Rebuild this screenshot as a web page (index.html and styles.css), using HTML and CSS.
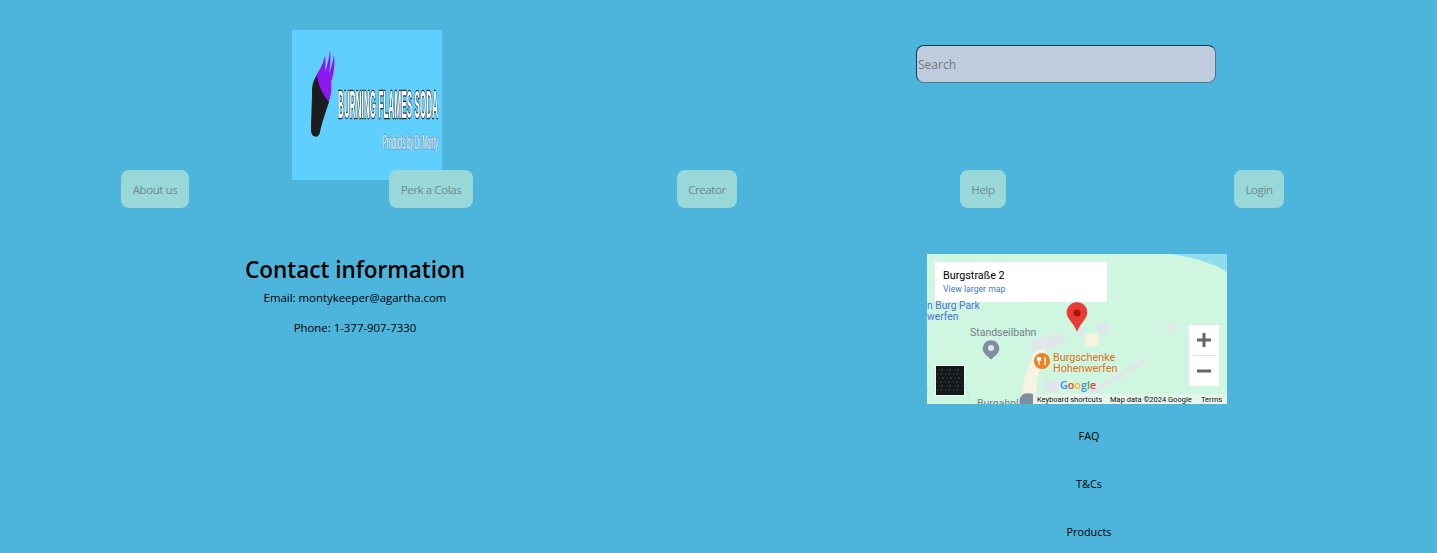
FILE: index.html
```html
<!DOCTYPE html>
<html lang="en">
<head>
<meta charset="utf-8">
<title>Burning Flames Soda</title>
<link rel="stylesheet" href="styles.css">
</head>
<body>
<header class="top">
  <svg class="logo" viewBox="0 0 150 150" width="150" height="150" role="img" aria-label="Burning Flames Soda logo">
    <defs><filter id="soft"><feGaussianBlur stdDeviation="0.45"/></filter></defs>
    <rect class="logo-bg" width="150" height="150"/>
    <g filter="url(#soft)">
      <path class="flame" d="M23 48C27 40 31 36 33 25C34 32 33 38 33 42C35 36 37 30 38 20C39 28 38 38 37 44C39 38 41 32 42 25C43 34 42 44 39 52C40 58 39 66 36 74Z"/>
      <path class="torch" d="M25 46C21 50 20 56 20 62C20 75 19 90 19 100C19 108 27 109 28 102C30 92 33 84 37 72C32 66 27 58 25 46Z"/>
      <text class="logo-title" transform="translate(46 88) scale(1 4.8)" textLength="100">BURNING FLAMES SODA</text>
      <text class="logo-sub" transform="translate(91 119) scale(1 3.4)" textLength="55" lengthAdjust="spacingAndGlyphs">Products by Dr Monty</text>
    </g>
  </svg>
  <input class="search" type="text" placeholder="Search">
</header>

<nav class="nav">
  <a class="nav-btn">About us</a>
  <a class="nav-btn">Perk a Colas</a>
  <a class="nav-btn">Creator</a>
  <a class="nav-btn">Help</a>
  <a class="nav-btn">Login</a>
</nav>

<main class="main">
  <section class="contact">
    <h2 class="contact-title">Contact information</h2>
    <p class="contact-line">Email: montykeeper@agartha.com</p>
    <p class="contact-line">Phone: 1-377-907-7330</p>
  </section>
  <svg class="map" viewBox="0 0 300 150" width="300" height="150" role="img" aria-label="Map of Burgstraße 2">
    <rect class="m-land" width="300" height="150"/>
    <path class="m-water" d="M244 0L300 0L300 18C290 11 270 4 244 0Z"/>
    <path class="m-path" d="M93 150C96 125 102 105 112 92L120 94C112 110 108 130 110 150Z"/>
    <path class="m-bldg" d="M104 86L136 78L138 90L104 98ZM140 150L218 104L220 108L150 150Z"/>
    <path class="m-bldg" d="M118 126h14v12h-14zM147 76l8-3 4 7-8 3z"/>
    <circle class="m-bldg" cx="176" cy="74" r="6"/>
    <circle class="m-bldg" cx="244" cy="74" r="5"/>
    <rect class="m-sand" x="158" y="80" width="14" height="12" transform="rotate(-8 165 86)"/>
    <rect class="m-card" x="8" y="8" width="172" height="40"/>
    <text class="m-addr" x="16" y="25">Burgstraße 2</text>
    <text class="m-link" x="16" y="38">View larger map</text>
    <text class="m-blue" x="0" y="55">n Burg Park</text>
    <text class="m-blue" x="0" y="66">werfen</text>
    <text class="m-label" x="43" y="82">Standseilbahn</text>
    <path class="m-pin-gray" d="M64 86a8.500 8.500 0 0 1 6 14.500L64 106L58 100.500A8.500 8.500 0 0 1 64 86Z"/>
    <circle class="m-hole" cx="64" cy="94" r="3"/>
    <circle class="m-orange" cx="115" cy="107" r="8"/>
    <path class="m-fork" d="M112 103v8M118 103v8M110.500 103v3h3v-3"/>
    <text class="m-food" x="126" y="107">Burgschenke</text>
    <text class="m-food" x="126" y="118">Hohenwerfen</text>
    <g class="m-google">
      <text x="133" y="135"><tspan class="g-b">G</tspan><tspan class="g-r">o</tspan><tspan class="g-y">o</tspan><tspan class="g-b">g</tspan><tspan class="g-g">l</tspan><tspan class="g-r">e</tspan></text>
    </g>
    <text class="m-label" x="50" y="153">Burgahpl</text>
    <path class="m-pin-gray" d="M101 139a8 8 0 0 1 6 14L101 158L95 153A8 8 0 0 1 101 139Z"/>
    <path class="m-dash" d="M0 138L8 128M38 130L44 150"/>
    <rect class="m-thumb-b" x="8" y="111" width="30" height="31"/>
    <rect class="m-thumb" x="9" y="112" width="28" height="29"/>
    <path class="m-speck" d="M11 116h24M10 120h26M12 124h24M10 128h26M11 132h25M10 136h26"/>
    <rect class="m-bar" x="106" y="140" width="194" height="10"/>
    <text class="m-tiny" x="110" y="147.500">Keyboard shortcuts</text>
    <text class="m-tiny" x="183" y="147.500">Map data ©2024 Google</text>
    <text class="m-tiny" x="274" y="147.500">Terms</text>
    <rect class="m-card" x="262" y="71" width="30" height="61"/>
    <path class="m-line" d="M265 101.500h24"/>
    <path class="m-ctl" d="M277 79v14M270 86h14M270 117h14"/>
    <path class="m-pin" d="M150 48.500C144 48.500 140 53 140 58.500C140 65 147 69 150 77C153 69 160 65 160 58.500C160 53 156 48.500 150 48.500Z"/>
    <circle class="m-pin-dot" cx="150" cy="59" r="3.600"/>
  </svg>
</main>

<footer class="foot">
  <a class="foot-link">FAQ</a>
  <a class="foot-link">T&amp;Cs</a>
  <a class="foot-link">Products</a>
</footer>
</body>
</html>
```
FILE: styles.css
```css
* { box-sizing: border-box; }
html, body { height: 100%; }
body {
  margin: 0;
  background: #4db4dc;
  color: #000;
  font-family: "Open Sans", "Noto Sans", sans-serif;
  overflow: hidden;
}
.top {
  display: flex;
  align-items: flex-start;
  padding: 30px 0 0 292px;
}
.logo { display: block; flex: none; }
.logo-bg { fill: #5fcfff; }
.flame { fill: #8f12ef; }
.torch { fill: #1a1a1c; }
.logo-title {
  font: 700 8px "Liberation Sans", sans-serif;
  fill: #fff;
  stroke: #222;
  stroke-width: 0.5px;
  paint-order: stroke;
}
.logo-sub { font: 400 6px "Liberation Sans", sans-serif; fill: #f2f4f8; stroke: #667; stroke-width: 0.25px; paint-order: stroke; }
.search {
  margin: 15px 0 0 474px;
  width: 300px;
  height: 38px;
  padding: 1px;
  background: #bfccde;
  border: 1px solid #0d3a52;
  border-right-color: #4f7890;
  border-bottom-color: #4f7890;
  border-radius: 8px;
  font: 12px "Open Sans", sans-serif;
  outline: none;
}
.search::placeholder { color: #757575; opacity: 1; }

.nav {
  display: grid;
  grid-template-columns: repeat(5, 276px);
  justify-items: center;
  padding-left: 17px;
  margin-top: -10px;
  position: relative;
}
.nav-btn {
  display: flex;
  align-items: center;
  height: 38px;
  padding: 0 11.500px;
  background: #98d8d8;
  border-radius: 8px;
  color: #6f8a8c;
  font-size: 11.500px;
  letter-spacing: -0.4px;
}

.main {
  display: flex;
  align-items: flex-start;
  margin-top: 46px;
}
.contact { width: 710px; text-align: center; }
.contact-title {
  margin: 0 0 5px;
  font-size: 22.500px;
  font-weight: 600;
  line-height: 31px;
}
.contact-line { margin: 0 0 14px; font-size: 11.400px; line-height: 16px; }
.map { display: block; flex: none; margin-left: 217px; }
.m-land { fill: #cff6e0; }
.m-water { fill: #8edcec; }
.m-path { fill: #f6f2e4; }
.m-bldg { fill: #e0e7ea; }
.m-sand { fill: #f6f3df; }
.m-card { fill: #fff; }
.m-addr { font: 400 10.800px Roboto, sans-serif; fill: #000; }
.m-link { font: 400 8.700px Roboto, sans-serif; fill: #3b78d8; }
.m-blue { font: 400 10.300px Roboto, sans-serif; fill: #4a72d0; }
.m-label { font: 400 10.500px Roboto, sans-serif; fill: #6f7f88; }
.m-food { font: 400 10.800px Roboto, sans-serif; fill: #e0701a; }
.m-pin-gray { fill: #7d8f9c; stroke: #dfe8ea; stroke-width: 0.7px; }
.m-hole { fill: #dfe8ea; }
.m-orange { fill: #f2801f; }
.m-fork { fill: none; stroke: #fff; stroke-width: 1.400px; }
.m-google { font: 600 10.800px "Open Sans", sans-serif; }
.g-b { fill: #4285f4; }
.g-r { fill: #ea4335; }
.g-y { fill: #fbbc05; }
.g-g { fill: #34a853; }
.m-dash { fill: none; stroke: #a9c9b8; stroke-width: 0.6px; stroke-dasharray: 2 2; }
.m-thumb-b { fill: #f2f6f4; }
.m-thumb { fill: #14181a; }
.m-speck { fill: none; stroke: #3f4d50; stroke-width: 1px; stroke-dasharray: 1 2 2 3; }
.m-bar { fill: #e6f5ec; }
.m-tiny { font: 400 7.500px Roboto, sans-serif; fill: #111; }
.m-line { stroke: #e6e6e6; stroke-width: 1px; }
.m-ctl { fill: none; stroke: #666; stroke-width: 3px; }
.m-pin { fill: #ea3a35; stroke: #c9302c; stroke-width: 0.5px; }
.m-pin-dot { fill: #a9150f; }

.foot {
  display: flex;
  flex-direction: column;
  align-items: center;
  gap: 32px;
  padding-left: 741px;
  margin-top: 24px;
}
.foot-link { font-size: 10.800px; line-height: 16px; }
```
